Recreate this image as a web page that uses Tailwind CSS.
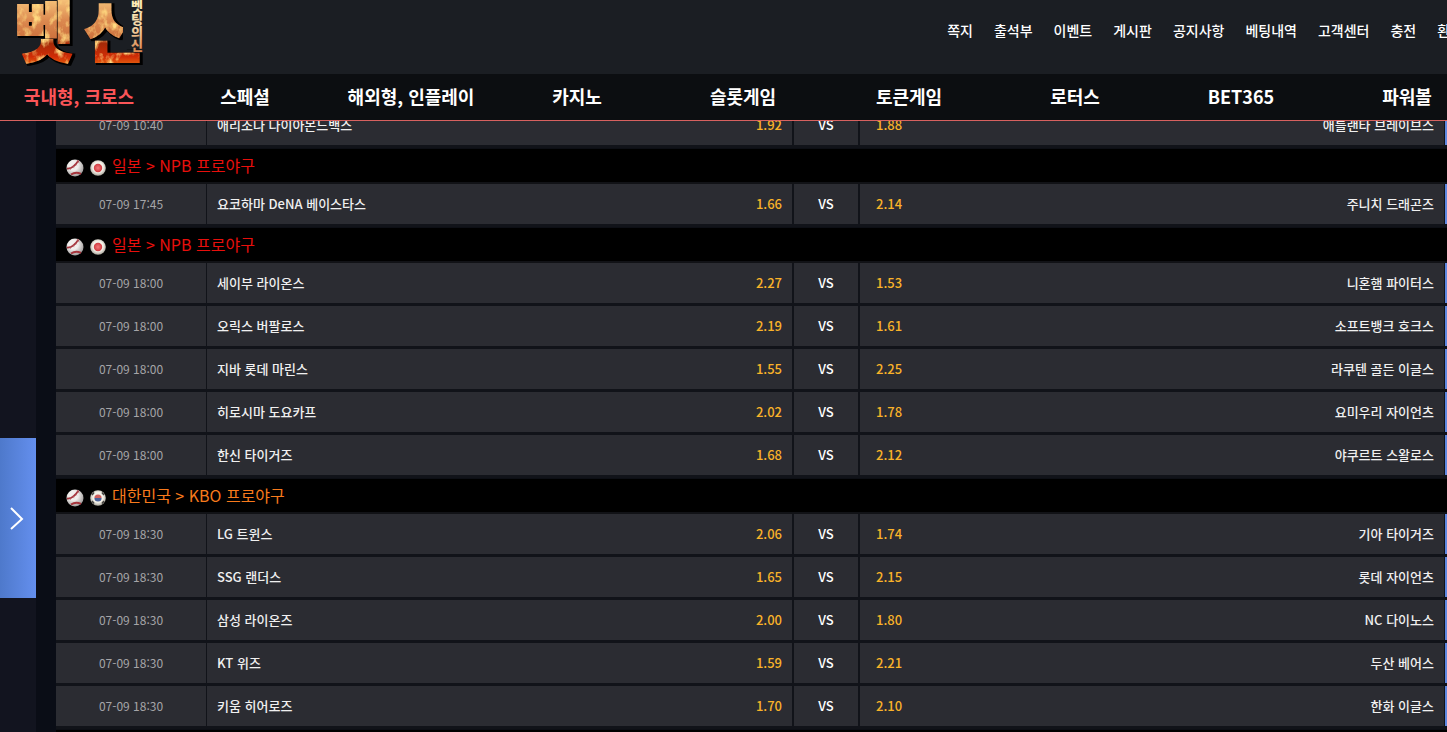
<!DOCTYPE html>
<html lang="ko">
<head>
    <meta charset="UTF-8">
    <meta name="viewport" content="width=device-width, initial-scale=1.0">
    <title>벳신</title>
    <script src="https://cdn.jsdelivr.net/npm/@tailwindcss/browser@4"></script>
</head>
<body class="flex h-screen flex-col overflow-hidden bg-[#0a0d16] font-['Noto_Sans_CJK_KR',sans-serif] text-white">
    <!-- Shared icons -->
    <svg class="absolute h-0 w-0" aria-hidden="true">
        <defs>
            <radialGradient id="ballShade" cx="0.4" cy="0.35" r="0.7">
                <stop offset="0.4" stop-color="#f2efed" />
                <stop offset="1" stop-color="#989494" />
            </radialGradient>
            <radialGradient id="flagShade" cx="0.5" cy="0.45" r="0.55">
                <stop offset="0.6" stop-color="#f4f1e8" />
                <stop offset="1" stop-color="#aaa69c" />
            </radialGradient>
            <radialGradient id="redDot">
                <stop offset="0" stop-color="#f47a7a" />
                <stop offset="1" stop-color="#d03a40" />
            </radialGradient>
        </defs>
        <symbol id="baseball" viewBox="0 0 18 18">
            <circle cx="9" cy="9" r="8.5" fill="url(#ballShade)" />
            <path d="M1 9.5C6 10 9 7 12.5 1.5" fill="none" stroke="#a5343c" stroke-width="1.8" />
            <path d="M5 15.5C8 13.5 12 13.5 15 14.8" fill="none" stroke="#a5343c" stroke-width="2" />
            <path d="M4 8l.6 3M7 6.6l1 2.6M9.2 4.6l2 1.8M11 2.8l2.4 1" stroke="#b86a6e" stroke-width=".6" />
        </symbol>
        <symbol id="japan" viewBox="0 0 16 16">
            <circle cx="8" cy="8" r="7.8" fill="url(#flagShade)" />
            <circle cx="8" cy="8" r="4.2" fill="url(#redDot)" />
        </symbol>
        <symbol id="korea" viewBox="0 0 16 16">
            <circle cx="8" cy="8" r="7.8" fill="url(#flagShade)" />
            <path d="M4.4 8a3.6 3.6 0 0 1 7.2 0z" fill="#d0605f" />
            <path d="M4.4 8a3.6 3.6 0 0 0 7.2 0z" fill="#4a6298" />
            <path d="M2 5l2-2.5M12 2.5l2 2.5M2 11l2 2.5M12 13.5l2-2.5" stroke="#44423f" stroke-width="1.6" />
        </symbol>
    </svg>

    <header class="relative z-10 shrink-0">
        <div class="flex h-[74px] items-start justify-between bg-[#1b1e23] pl-2">
            <a href="#" aria-label="벳신" class="shrink-0">
                <svg width="144" height="68" viewBox="0 0 144 68" font-family="Noto Sans CJK KR" font-weight="900" text-anchor="middle">
                    <defs>
                        <linearGradient id="fire" x1="0" y1="0" x2="0" y2="66" gradientUnits="userSpaceOnUse">
                            <stop offset="0" stop-color="#f5c078" />
                            <stop offset="0.3" stop-color="#dc8a50" />
                            <stop offset="0.6" stop-color="#cc703c" />
                            <stop offset="0.66" stop-color="#a52a08" />
                            <stop offset="0.86" stop-color="#d02c06" />
                            <stop offset="1" stop-color="#e86a10" />
                        </linearGradient>
                        <linearGradient id="gold" x1="0" y1="0" x2="0" y2="52" gradientUnits="userSpaceOnUse">
                            <stop offset="0" stop-color="#fff0b8" />
                            <stop offset="0.5" stop-color="#f2d6a8" />
                            <stop offset="1" stop-color="#d8854e" />
                        </linearGradient>
                        <filter id="grain" x="-10%" y="-10%" width="120%" height="120%" color-interpolation-filters="sRGB">
                            <feMorphology in="SourceAlpha" operator="dilate" radius="1" />
                            <feOffset dx="2" dy="1" result="shadow" />
                            <feTurbulence type="fractalNoise" baseFrequency="0.12 0.09" numOctaves="4" seed="4" />
                            <feColorMatrix values="0 0 0 0 1  0 0 0 0 0.85  0 0 0 0 0.5  3 0 0 0 -1.4" />
                            <feComposite in2="SourceGraphic" operator="in" result="spots" />
                            <feMerge>
                                <feMergeNode in="shadow" />
                                <feMergeNode in="SourceGraphic" />
                                <feMergeNode in="spots" />
                            </feMerge>
                        </filter>
                        <!-- the small lettering takes the place of the upright stem -->
                        <clipPath id="cutStem"><path d="M0 0H115V49H144V68H0z" /></clipPath>
                    </defs>
                    <g clip-path="url(#cutStem)">
                        <g font-size="65" fill="url(#fire)" stroke="url(#fire)" stroke-width="2" filter="url(#grain)">
                            <text x="36" y="56">벳</text>
                            <text x="106" y="56">신</text>
                        </g>
                    </g>
                    <g font-size="13" fill="url(#gold)">
                        <text x="129" y="11">벳</text>
                        <text x="129" y="24">팅</text>
                        <text x="129" y="37">의</text>
                        <text x="129" y="50">신</text>
                    </g>
                </svg>
            </a>
            <ul class="-mr-4 flex shrink-0 gap-[21px] pt-5 text-sm leading-5 font-medium whitespace-nowrap">
                <li><a href="#">쪽지</a></li>
                <li><a href="#">출석부</a></li>
                <li><a href="#">이벤트</a></li>
                <li><a href="#">게시판</a></li>
                <li><a href="#">공지사항</a></li>
                <li><a href="#">베팅내역</a></li>
                <li><a href="#">고객센터</a></li>
                <li><a href="#">충전</a></li>
                <li><a href="#">환전</a></li>
            </ul>
        </div>
        <nav class="border-b border-[#d8615f] bg-[#0c0e11]">
            <ul class="-ml-1 grid h-[46px] auto-cols-[166px] grid-flow-col items-center pb-0.5 text-center text-lg font-bold whitespace-nowrap">
                <li><a href="#" class="text-[#fb5558]">국내형, 크로스</a></li>
                <li><a href="#">스페셜</a></li>
                <li><a href="#">해외형, 인플레이</a></li>
                <li><a href="#">카지노</a></li>
                <li><a href="#">슬롯게임</a></li>
                <li><a href="#">토큰게임</a></li>
                <li><a href="#">로터스</a></li>
                <li><a href="#">BET365</a></li>
                <li><a href="#">파워볼</a></li>
            </ul>
        </nav>
    </header>

    <div class="-mt-4 flex min-h-0 grow overflow-hidden">
        <aside class="w-9 shrink-0 bg-[#12141f]"></aside>
        <main class="grow pl-5">
            <table class="w-full table-fixed border-separate border-spacing-0 text-[13px] leading-5">
                <colgroup>
                    <col class="w-[151px]">
                    <col class="w-[42.2%]">
                    <col class="w-[66px]">
                    <col>
                    <col class="w-[2px]">
                </colgroup>
                <tbody id="games"></tbody>
            </table>
        </main>
    </div>

    <button type="button" aria-label="열기" class="fixed top-[438px] left-0 z-20 flex h-40 w-9 items-center bg-linear-to-r from-[#4e79cb] to-[#648fee] pl-2">
        <svg class="h-6 w-4" viewBox="0 0 16 24" fill="none" stroke="#fff" stroke-width="2">
            <path d="M3 2l11 11L3 23" />
        </svg>
    </button>

    <script>
        const leagues = [
            { games: [['07-09 10:40', '애리조나 다이아몬드백스', '1.92', '1.88', '애틀랜타 브레이브스']] },
            { flag: 'japan', color: 'text-[#e80f0c]', name: '일본 > NPB 프로야구', games: [
                ['07-09 17:45', '요코하마 DeNA 베이스타스', '1.66', '2.14', '주니치 드래곤즈']
            ] },
            { flag: 'japan', color: 'text-[#e80f0c]', name: '일본 > NPB 프로야구', games: [
                ['07-09 18:00', '세이부 라이온스', '2.27', '1.53', '니혼햄 파이터스'],
                ['07-09 18:00', '오릭스 버팔로스', '2.19', '1.61', '소프트뱅크 호크스'],
                ['07-09 18:00', '지바 롯데 마린스', '1.55', '2.25', '라쿠텐 골든 이글스'],
                ['07-09 18:00', '히로시마 도요카프', '2.02', '1.78', '요미우리 자이언츠'],
                ['07-09 18:00', '한신 타이거즈', '1.68', '2.12', '야쿠르트 스왈로스']
            ] },
            { flag: 'korea', color: 'text-[#f87a1c]', name: '대한민국 > KBO 프로야구', games: [
                ['07-09 18:30', 'LG 트윈스', '2.06', '1.74', '기아 타이거즈'],
                ['07-09 18:30', 'SSG 랜더스', '1.65', '2.15', '롯데 자이언츠'],
                ['07-09 18:30', '삼성 라이온즈', '2.00', '1.80', 'NC 다이노스'],
                ['07-09 18:30', 'KT 위즈', '1.59', '2.21', '두산 베어스'],
                ['07-09 18:30', '키움 히어로즈', '1.70', '2.10', '한화 이글스']
            ] }
        ];

        let html = '';
        leagues.forEach(league => {
            if (league.name) {
                html += `
                <tr>
                    <th colspan="5" class="border-t border-b-2 border-t-[#0d0f15] border-b-[#111216] bg-black p-0 font-normal">
                        <div class="flex h-[33px] items-center gap-[6px] pl-[10px] text-base ${league.color}">
                            <svg class="mt-1 h-[18px] w-[18px]"><use href="#baseball" /></svg>
                            <svg class="mt-1 h-4 w-4"><use href="#${league.flag}" /></svg>
                            <span class="pb-0.5">${league.name.replace('>', '&gt;')}</span>
                        </div>
                    </th>
                </tr>`;
            }
            league.games.forEach(([time, home, homeOdds, awayOdds, away]) => {
                html += `
                <tr class="h-[43px] *:border-b-3 *:border-[#111319]">
                    <td class="border-r bg-[#2b2c32] p-0 text-center text-xs text-[#a5a5a8]">${time}</td>
                    <td class="border-r-2 bg-[#2b2c32] px-[10px] py-0">
                        <div class="flex justify-between font-medium text-[#f0f0f0]"><span>${home}</span><span class="text-[#f9b229]">${homeOdds}</span></div>
                    </td>
                    <td class="border-r-2 bg-[#2b2c32] p-0 text-center font-medium">VS</td>
                    <td class="border-r bg-[#2b2c32] py-0 pr-[10px] pl-4">
                        <div class="flex justify-between font-medium text-[#f0f0f0]"><span class="text-[#f9b229]">${awayOdds}</span><span>${away}</span></div>
                    </td>
                    <td class="bg-[#5f88e0] p-0"></td>
                </tr>`;
            });
        });
        // next league starts right under the last game
        html += '<tr><td colspan="5" class="h-1 border-t border-[#0d0f15] bg-black p-0"></td></tr>';
        document.getElementById('games').innerHTML = html;
    </script>
</body>
</html>
